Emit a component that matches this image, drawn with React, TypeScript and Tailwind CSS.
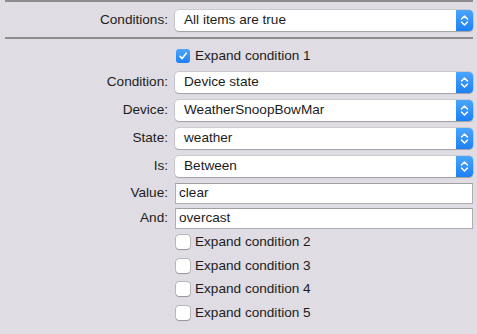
import React from "react";

const font = { fontFamily: '"Helvetica Neue", "Liberation Sans", Arial, sans-serif' };

function Stepper() {
  return (
    <div className="w-[17px] h-full rounded-r-[4px] bg-gradient-to-b from-[#4aa5fd] to-[#1b7ff6] flex items-center justify-center">
      <svg width="9" height="13" viewBox="0 0 9 13" fill="none">
        <path d="M1.5 5 L4.5 2 L7.5 5" stroke="white" strokeWidth="1.5" strokeLinecap="round" strokeLinejoin="round" />
        <path d="M1.5 8 L4.5 11 L7.5 8" stroke="white" strokeWidth="1.5" strokeLinecap="round" strokeLinejoin="round" />
      </svg>
    </div>
  );
}

function Popup({ value }: { value: string }) {
  return (
    <div className="flex-1 h-[21px] flex bg-white rounded-[4px] shadow-[0_0_0_0.5px_rgba(0,0,0,0.18),0_1px_1px_rgba(0,0,0,0.2)]">
      <div className="flex-1 pl-[9px] flex items-center text-[13.6px] text-[#1c1c1c]">{value}</div>
      <Stepper />
    </div>
  );
}

function Field({ value }: { value: string }) {
  return (
    <div className="flex-1 h-[21px] flex items-center bg-white border border-[#b0b0b0] border-t-[#a0a0a0] pl-[3px] text-[13.6px] text-[#1c1c1c]">
      {value}
    </div>
  );
}

function Row({ label, children, mt }: { label: string; children: React.ReactNode; mt: string }) {
  return (
    <div className={`flex items-center ${mt}`}>
      <div className="w-[169px] text-right text-[13.6px] text-[#1c1c1c] pr-[1px]">{label}</div>
      <div className="w-[6px]" />
      {children}
    </div>
  );
}

function Check({ label, checked }: { label: string; checked?: boolean }) {
  return (
    <div className="flex items-center h-[23.5px] pl-[176px]">
      {checked ? (
        <div className="w-[14px] h-[14px] rounded-[3px] bg-gradient-to-b from-[#4aa5fd] to-[#1b7ff6] flex items-center justify-center">
          <svg width="10" height="10" viewBox="0 0 10 10" fill="none">
            <path d="M2 5.3 L4.1 7.6 L8.2 2.2" stroke="white" strokeWidth="1.6" strokeLinecap="round" strokeLinejoin="round" />
          </svg>
        </div>
      ) : (
        <div className="w-[14px] h-[14px] rounded-[3px] bg-white shadow-[0_0_0_0.5px_rgba(0,0,0,0.3),0_0.5px_1px_rgba(0,0,0,0.2)]" />
      )}
      <span className="ml-[5px] text-[13.6px] text-[#1c1c1c]">{label}</span>
    </div>
  );
}

export default function App() {
  return (
    <div className="w-[477px] h-[334px] bg-[#dfdde3] overflow-hidden pr-[4px]" style={font}>
      <div className="ml-[5px] h-[2px] bg-[#8c8c8c]" />
      <Row label="Conditions:" mt="mt-[8px]">
        <Popup value="All items are true" />
      </Row>
      <div className="ml-[5px] mt-[6px] h-[2px] bg-[#8c8c8c]" />
      <div className="mt-[5px]">
        <Check label="Expand condition 1" checked />
      </div>
      <Row label="Condition:" mt="mt-[4px]">
        <Popup value="Device state" />
      </Row>
      <Row label="Device:" mt="mt-[7px]">
        <Popup value="WeatherSnoopBowMar" />
      </Row>
      <Row label="State:" mt="mt-[7px]">
        <Popup value="weather" />
      </Row>
      <Row label="Is:" mt="mt-[7px]">
        <Popup value="Between" />
      </Row>
      <Row label="Value:" mt="mt-[6px]">
        <Field value="clear" />
      </Row>
      <Row label="And:" mt="mt-[4px]">
        <Field value="overcast" />
      </Row>
      <div className="mt-[2px]">
        <Check label="Expand condition 2" />
        <Check label="Expand condition 3" />
        <Check label="Expand condition 4" />
        <Check label="Expand condition 5" />
      </div>
    </div>
  );
}
